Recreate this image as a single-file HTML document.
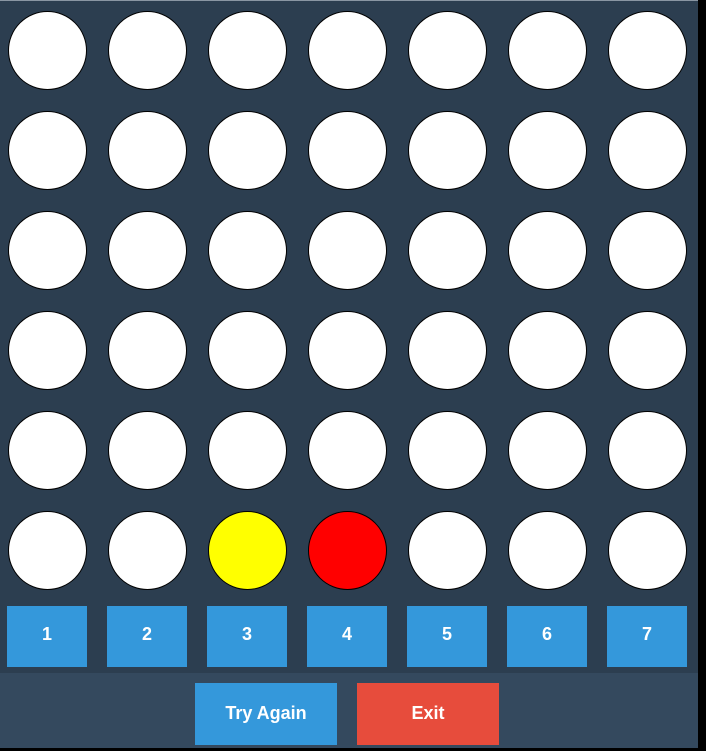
<!DOCTYPE html>
<html><head><style>
html,body{margin:0;padding:0;width:706px;height:751px;overflow:hidden;background:#000;font-family:"Liberation Sans",sans-serif;}
#board{position:absolute;left:0;top:0;width:698px;height:673px;background:#2c3e50;}
#top{position:absolute;left:0;top:0;width:698px;height:1px;background:#8a96a3;}
.c{position:absolute;width:77px;height:77px;border-radius:50%;background:#fff;border:1.5px solid #000;box-sizing:content-box;}
.b{position:absolute;top:606px;width:80px;height:57px;padding-bottom:4px;background:#3498db;color:#fff;font-weight:bold;font-size:18px;display:flex;align-items:center;justify-content:center;}
#panel{position:absolute;left:0;top:673px;width:698px;height:75px;background:#34495e;}
.a{position:absolute;top:683px;width:142px;height:60px;padding-bottom:2px;color:#fff;font-weight:bold;font-size:18px;display:flex;align-items:center;justify-content:center;}
</style></head><body>
<div id="board"></div><div id="top"></div>
<div id="panel"></div>
<div id="circles"></div>
<script>
var h='';
for(var r=0;r<6;r++)for(var c=0;c<7;c++){
 var bg='#fff';
 if(r==5&&c==2)bg='#ffff00';
 if(r==5&&c==3)bg='#ff0000';
 h+='<div class="c" style="left:'+(8+c*100)+'px;top:'+(10.5+r*100)+'px;background:'+bg+'"></div>';
}
for(var c=0;c<7;c++)h+='<div class="b" style="left:'+(7+c*100)+'px">'+(c+1)+'</div>';
document.getElementById('circles').innerHTML=h;
</script>
<div class="a" style="left:195px;background:#3498db">Try Again</div>
<div class="a" style="left:357px;background:#e74c3c">Exit</div>
</body></html>
